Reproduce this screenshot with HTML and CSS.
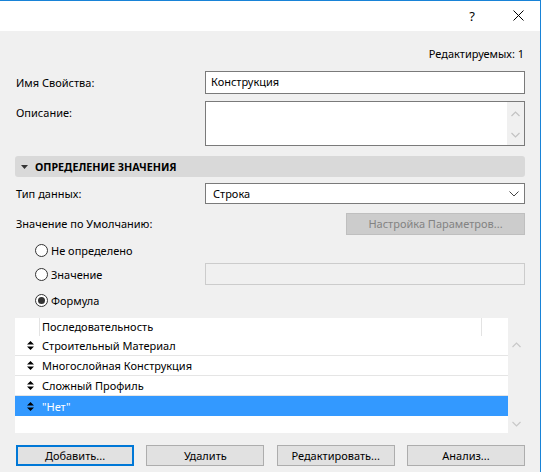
FILE: index.html
```html
<!DOCTYPE html>
<html>
<head>
<meta charset="utf-8">
<link rel="stylesheet" href="styles.css">
</head>
<body>
<div class="window">
  <div class="titlebar">
    <span class="tb-help">?</span>
    <span class="tb-close"><svg width="11" height="11" viewBox="0 0 11 11"><path d="M0.5 0.5L10.5 10.5M10.5 0.5L0.5 10.5" stroke="#000" stroke-width="1" fill="none"/></svg></span>
  </div>
  <div class="content">
    <div class="counter">Редактируемых: 1</div>

    <div class="row r-name">
      <div class="label">Имя Свойства:</div>
      <div class="input">Конструкция</div>
    </div>

    <div class="row r-desc">
      <div class="label label-top">Описание:</div>
      <div class="textarea">
        <div class="vscroll">
          <svg width="9" height="6" viewBox="0 0 9 6"><path d="M0.5 5L4.5 1L8.5 5" stroke="#c2c2c2" stroke-width="1.2" fill="none"/></svg>
          <svg width="9" height="6" viewBox="0 0 9 6"><path d="M0.5 1L4.5 5L8.5 1" stroke="#c2c2c2" stroke-width="1.2" fill="none"/></svg>
        </div>
      </div>
    </div>

    <div class="section">
      <svg class="tri" width="7" height="4" viewBox="0 0 7 4"><path d="M0 0H7L3.5 4Z" fill="#333"/></svg>
      <span>ОПРЕДЕЛЕНИЕ ЗНАЧЕНИЯ</span>
    </div>

    <div class="row r-type">
      <div class="label">Тип данных:</div>
      <div class="select">
        <span>Строка</span>
        <svg width="10" height="6" viewBox="0 0 10 6"><path d="M0.5 0.5L5 5L9.5 0.5" stroke="#444" stroke-width="1" fill="none"/></svg>
      </div>
    </div>

    <div class="row r-default">
      <div class="label">Значение по Умолчанию:</div>
      <div class="btn-disabled">Настройка Параметров...</div>
    </div>

    <div class="radio r1"><span class="circle"></span><span>Не определено</span></div>
    <div class="row r-value">
      <div class="radio-inline"><span class="circle"></span><span>Значение</span></div>
      <div class="input-disabled"></div>
    </div>
    <div class="radio r3"><span class="circle checked"></span><span>Формула</span></div>

    <div class="listwrap">
      <div class="list">
        <div class="lhead">
          <div class="hc-left"></div>
          <div class="hc-main">Последовательность</div>
          <div class="hc-right"></div>
        </div>
        <div class="lrow"><svg class="sort" width="7" height="9" viewBox="0 0 7 9"><path d="M3.5 0L7 3.5H0Z M0 5.5H7L3.5 9Z" fill="#000"/></svg><span>Строительный Материал</span></div>
        <div class="lrow"><svg class="sort" width="7" height="9" viewBox="0 0 7 9"><path d="M3.5 0L7 3.5H0Z M0 5.5H7L3.5 9Z" fill="#000"/></svg><span>Многослойная Конструкция</span></div>
        <div class="lrow"><svg class="sort" width="7" height="9" viewBox="0 0 7 9"><path d="M3.5 0L7 3.5H0Z M0 5.5H7L3.5 9Z" fill="#000"/></svg><span>Сложный Профиль</span></div>
        <div class="lrow sel"><svg class="sort" width="7" height="9" viewBox="0 0 7 9"><path d="M3.5 0L7 3.5H0Z M0 5.5H7L3.5 9Z" fill="#000"/></svg><span>"Нет"</span></div>
      </div>
      <div class="lscroll">
        <svg width="9" height="6" viewBox="0 0 9 6"><path d="M0.5 5L4.5 1L8.5 5" stroke="#c8c8c8" stroke-width="1.2" fill="none"/></svg>
        <svg width="9" height="6" viewBox="0 0 9 6"><path d="M0.5 1L4.5 5L8.5 1" stroke="#c8c8c8" stroke-width="1.2" fill="none"/></svg>
      </div>
    </div>

    <div class="buttons">
      <div class="btn default">Добавить...</div>
      <div class="btn">Удалить</div>
      <div class="btn">Редактировать...</div>
      <div class="btn">Анализ...</div>
    </div>
  </div>
</div>
</body>
</html>
```
FILE: styles.css
```css
* { box-sizing: border-box; }
html, body { margin: 0; padding: 0; }
body {
  width: 541px;
  height: 472px;
  overflow: hidden;
  font-family: "Noto Sans", "Open Sans", sans-serif;
  font-size: 11px;
  color: #000;
  background: #f0f0f0;
}
.window {
  width: 541px;
  height: 472px;
  border-top: 1px solid #1883d7;
  border-right: 1px solid #1883d7;
  background: #f0f0f0;
  display: flex;
  flex-direction: column;
}
.titlebar {
  height: 30px;
  flex: none;
  background: #fff;
  display: flex;
  align-items: center;
  justify-content: flex-end;
  padding-right: 16px;
}
.tb-help {
  font-size: 13px;
  line-height: 16px;
  margin-right: 38px;
  margin-top: -1px;
}
.tb-close { display: flex; margin-top: -1px; }
.content {
  flex: 1;
  padding: 0 15px 0 15px;
  display: flex;
  flex-direction: column;
}
.counter {
  margin-top: 15px;
  height: 16px;
  line-height: 16px;
  text-align: right;
  padding-right: 1px;
}
.row {
  display: flex;
  align-items: center;
}
.label {
  width: 190px;
  flex: none;
  padding-left: 1px;
  line-height: 16px;
}
.label-top { align-self: flex-start; padding-top: 4px; }
.r-name { margin-top: 9px; height: 23px; }
.input {
  flex: 1;
  height: 23px;
  background: #fff;
  border: 1px solid #7a7a7a;
  padding-left: 5px;
  line-height: 20px;
}
.r-desc { margin-top: 7px; height: 45px; }
.textarea {
  flex: 1;
  height: 45px;
  background: #fff;
  border: 1px solid #7a7a7a;
  display: flex;
  justify-content: flex-end;
}
.vscroll {
  width: 17px;
  background: #f0f0f0;
  display: flex;
  flex-direction: column;
  align-items: center;
  justify-content: space-between;
  padding: 9px 0 7px;
}
.section {
  margin-top: 10px;
  height: 21px;
  background: #d9d9d9;
  border-radius: 3px;
  display: flex;
  align-items: center;
  padding-left: 6px;
  font-weight: bold;
  font-size: 10.7px;
}
.section .tri { margin-right: 7px; }
.r-type { margin-top: 6px; height: 21px; }
.select {
  flex: 1;
  height: 21px;
  background: #fff;
  border: 1px solid #7a7a7a;
  display: flex;
  align-items: center;
  justify-content: space-between;
  padding: 0 5px 0 7px;
}
.r-default { margin-top: 9px; height: 22px; justify-content: space-between; }
.btn-disabled {
  width: 179px;
  height: 22px;
  background: #cccccc;
  border: 1px solid #bfbfbf;
  color: #838383;
  text-align: center;
  line-height: 20px;
}
.radio, .radio-inline {
  display: flex;
  align-items: center;
  padding-left: 20px;
  height: 16px;
}
.radio-inline { width: 190px; flex: none; }
.circle {
  width: 13px;
  height: 13px;
  border: 1px solid #333;
  border-radius: 50%;
  background: #fff;
  margin-right: 3px;
  display: flex;
  align-items: center;
  justify-content: center;
}
.circle.checked::after {
  content: "";
  width: 7px;
  height: 7px;
  border-radius: 50%;
  background: #333;
}
.r1 { margin-top: 7px; }
.r-value { margin-top: 5px; height: 22px; }
.input-disabled {
  flex: 1;
  height: 22px;
  border: 1px solid #cccccc;
  background: #f0f0f0;
}
.r3 { margin-top: 7px; }
.listwrap {
  margin-top: 10px;
  height: 115px;
  display: flex;
}
.list {
  width: 493px;
  background: #fff;
  display: flex;
  flex-direction: column;
}
.lhead {
  height: 18px;
  display: flex;
  width: 492px;
}
.hc-left { width: 25px; border-right: 1px solid #e3e3e3; }
.hc-main { flex: 1; padding-left: 2px; line-height: 17px; border-right: 1px solid #e3e3e3; }
.hc-right { width: 25px; }
.lrow {
  height: 20px;
  display: flex;
  align-items: center;
  border-bottom: 1px solid #e5e5e5;
}
.lrow .sort { margin-left: 12px; margin-right: 8px; }
.lrow.sel {
  background: #3399ff;
  color: #fff;
  border-bottom: none;
}
.lscroll {
  width: 17px;
  display: flex;
  flex-direction: column;
  align-items: center;
  justify-content: space-between;
  padding: 24px 0 6px;
}
.buttons {
  margin-top: 12px;
  height: 21px;
  display: flex;
  justify-content: space-between;
  padding-left: 1px;
}
.btn {
  width: 118px;
  height: 21px;
  background: #e1e1e1;
  border: 1px solid #adadad;
  text-align: center;
  line-height: 19px;
}
.btn.default {
  border: 2px solid #0078d7;
  line-height: 17px;
}
```
